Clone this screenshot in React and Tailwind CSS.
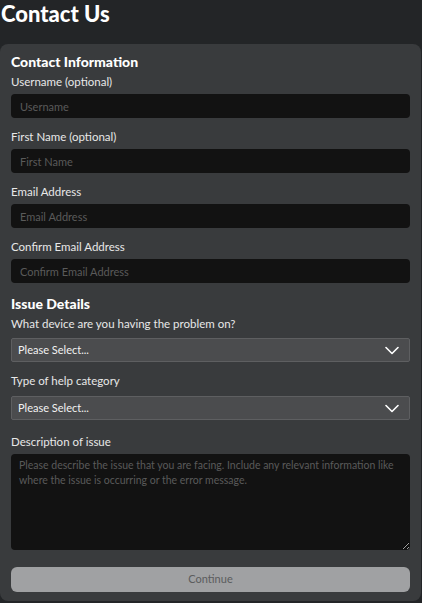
const font = { fontFamily: 'Lato, "Noto Sans", sans-serif' };

function Label({ children, className = "" }) {
  return (
    <div className={`text-[11.5px] leading-[16px] text-[#e8e8e8] ${className}`}>
      {children}
    </div>
  );
}

function TextInput({ placeholder }) {
  return (
    <input
      placeholder={placeholder}
      className="mt-[4px] h-[24px] w-full rounded-[4px] bg-[#121212] px-[9px] text-[11px] text-white outline-none placeholder:text-[#5a5a5a]"
    />
  );
}

function Chevron() {
  return (
    <svg width="14" height="9" viewBox="0 0 14 9" fill="none">
      <polyline
        points="1,1.5 7,7.5 13,1.5"
        stroke="white"
        strokeWidth="1.6"
        strokeLinecap="round"
        strokeLinejoin="round"
      />
    </svg>
  );
}

function Select() {
  return (
    <div className="flex h-[24px] w-full items-center justify-between rounded-[2px] border border-[#5e5f61] bg-[#4b4c4e] pl-[6px] pr-[10px]">
      <span className="text-[11px] text-[#f2f2f2]">Please Select...</span>
      <Chevron />
    </div>
  );
}

export default function App() {
  return (
    <div className="min-h-[603px] w-[422px] bg-[#232527]" style={font}>
      <div className="flex h-[44px] items-start pl-[1px]">
        <h1 className="text-[22px] font-black leading-[28px] text-white">
          Contact Us
        </h1>
      </div>

      <div className="w-[421px] rounded-[8px] bg-[#393b3d] px-[11px] pt-[8px] pb-[9px]">
        <h2 className="text-[14px] font-black leading-[20px] text-white">
          Contact Information
        </h2>
        <Label className="mt-[2px]">Username (optional)</Label>
        <TextInput placeholder="Username" />

        <Label className="mt-[11px]">First Name (optional)</Label>
        <TextInput placeholder="First Name" />

        <Label className="mt-[11px]">Email Address</Label>
        <TextInput placeholder="Email Address" />

        <Label className="mt-[11px]">Confirm Email Address</Label>
        <TextInput placeholder="Confirm Email Address" />

        <h2 className="mt-[11px] text-[14px] font-black leading-[20px] text-white">
          Issue Details
        </h2>
        <Label className="mt-[2px] mb-[6px]">
          What device are you having the problem on?
        </Label>
        <Select />

        <Label className="mt-[11px] mb-[7px]">Type of help category</Label>
        <Select />

        <Label className="mt-[14px]">Description of issue</Label>
        <textarea
          placeholder="Please describe the issue that you are facing. Include any relevant information like where the issue is occurring or the error message."
          className="mt-[4px] block h-[96px] w-full resize-y rounded-[4px] bg-[#121212] px-[8px] py-[4px] text-[10.5px] leading-[15px] text-white outline-none placeholder:text-[#5a5a5a]"
        />

        <button className="mt-[17px] h-[25px] w-full rounded-[6px] bg-[#a0a1a3] text-[11px] text-[#5b5c5d]">
          Continue
        </button>
      </div>
    </div>
  );
}
